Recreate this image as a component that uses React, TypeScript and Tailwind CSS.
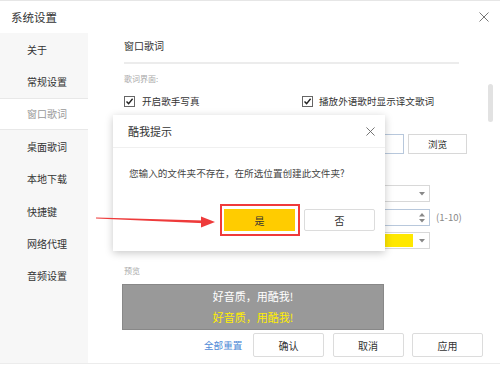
import React from 'react';

const font = "font-['Noto_Sans_CJK_SC','Microsoft_YaHei',sans-serif]";

const navItems = ['关于', '常规设置', '窗口歌词', '桌面歌词', '本地下载', '快捷键', '网络代理', '音频设置'];

const CloseIcon: React.FC<{ size: number; color?: string }> = ({ size, color = '#777' }) => (
    <svg width={size} height={size} viewBox="0 0 10 10" fill="none">
        <path d="M0.5 0.5 L9.5 9.5 M9.5 0.5 L0.5 9.5" stroke={color} strokeWidth="1" />
    </svg>
);

const Checkbox: React.FC = () => (
    <div className="w-[11px] h-[11px] border border-[#666] bg-white flex items-center justify-center">
        <svg width="9" height="9" viewBox="0 0 9 9" fill="none">
            <path d="M1.5 4.5 L3.6 6.6 L7.6 1.8" stroke="#222" strokeWidth="1.4" />
        </svg>
    </div>
);

const Caret: React.FC = () => (
    <svg width="6" height="4" viewBox="0 0 6 4">
        <path d="M0 0 L6 0 L3 3.5 Z" fill="#888" />
    </svg>
);

const App: React.FC = () => {
    return (
        <div className={`${font} relative w-[500px] h-[365px] overflow-hidden bg-white border-t border-[#e6e6e6] text-[#333]`}>
            {/* title bar */}
            <div className="h-[32px] flex items-center justify-between pl-[11px] pr-[11px]">
                <span className="text-[11.5px] leading-[14px]">系统设置</span>
                <CloseIcon size={10} />
            </div>

            <div className="flex h-[331px] border-b border-[#ececec]">
                {/* sidebar */}
                <div className="w-[88px] bg-[#f7f7f7] flex flex-col">
                    {navItems.map((item) => (
                        <div
                            key={item}
                            className={`h-[32.4px] flex items-center pl-[27px] text-[10px] ${
                                item === '窗口歌词' ? 'bg-white border-y border-[#e8e8e8] text-[#999]' : 'text-[#333]'
                            }`}
                        >
                            {item}
                        </div>
                    ))}
                </div>

                {/* content */}
                <div className="relative flex-1 pl-[36px] flex flex-col">
                    <div className="mt-[6px] h-[14px] leading-[14px] text-[10px]">窗口歌词</div>
                    <div className="mt-[9px] h-[2px] w-[335px] bg-[#ececec]" />
                    <div className="mt-[10px] h-[10px] leading-[10px] text-[8px] text-[#aaa]">歌词界面:</div>

                    <div className="mt-[11px] h-[12px] flex items-center text-[9.6px]">
                        <div className="w-[178px] flex items-center gap-[7px]">
                            <Checkbox />
                            <span>开启歌手写真</span>
                        </div>
                        <div className="flex items-center gap-[6px]">
                            <Checkbox />
                            <span>播放外语歌时显示译文歌词</span>
                        </div>
                    </div>

                    <div className="mt-[27px] h-[20px] flex items-center">
                        <div className="ml-[50px] w-[230px] h-[20px] border border-[#b8c8dc] bg-white" />
                        <div className="ml-[4px] w-[59px] h-[20px] border border-[#d8d8d8] flex items-center justify-center text-[9.6px]">
                            浏览
                        </div>
                    </div>

                    <div className="mt-[31px] ml-[176px] w-[130px] h-[17px] border border-[#d8d8d8] flex items-center justify-end pr-[4px]">
                        <Caret />
                    </div>

                    <div className="mt-[7px] flex items-center">
                        <div className="ml-[176px] w-[130px] h-[17px] border border-[#b8c8dc] flex items-center justify-end pr-[4px]">
                            <div className="flex flex-col gap-[2px]">
                                <svg width="6" height="4" viewBox="0 0 6 4">
                                    <path d="M0 3.5 L6 3.5 L3 0 Z" fill="#888" />
                                </svg>
                                <Caret />
                            </div>
                        </div>
                        <span className="ml-[6px] text-[9.6px] text-[#888]">(1-10)</span>
                    </div>

                    <div className="mt-[6px] ml-[176px] w-[130px] h-[17px] border border-[#d8d8d8] flex items-center pl-[3px] pr-[4px]">
                        <div className="flex-1 h-[13px] bg-[#ffe800]" />
                        <div className="ml-[6px]">
                            <Caret />
                        </div>
                    </div>

                    <div className="mt-[17px] h-[10px] leading-[10px] text-[8px] text-[#aaa]">预览</div>
                    <div className="mt-[8px] -ml-[2px] w-[262px] h-[46px] bg-[#999] border border-[#888] flex flex-col items-center justify-center gap-[8px] text-[11px] leading-[13px]">
                        <span className="text-white">好音质，用酷我!</span>
                        <span className="text-[#ffee00]">好音质，用酷我!</span>
                    </div>

                    <div className="mt-[3px] h-[24px] flex items-center text-[10px]">
                        <span className="ml-[80px] w-[38px] whitespace-nowrap text-[9.6px] text-[#4f8ad6]">全部重置</span>
                        <div className="ml-[11px] flex gap-[8.5px]">
                            {['确认', '取消', '应用'].map((b) => (
                                <div
                                    key={b}
                                    className="w-[71px] h-[24px] border border-[#dcdcdc] rounded-[2px] bg-white flex items-center justify-center"
                                >
                                    {b}
                                </div>
                            ))}
                        </div>
                    </div>

                    {/* scrollbar thumb */}
                    <div className="absolute right-[7px] top-[51px] w-[5px] h-[38px] rounded-full bg-[#e2e2e2]" />
                </div>
            </div>

            {/* dialog */}
            <div className="absolute left-[113px] top-[114px] w-[272px] h-[136px] bg-white shadow-[0_2px_8px_rgba(0,0,0,0.22)] flex flex-col">
                <div className="h-[33px] border-b border-[#f0f0f0] flex items-center justify-between pl-[15px] pr-[10px]">
                    <span className="text-[11px]">酷我提示</span>
                    <CloseIcon size={9} color="#666" />
                </div>
                <div className="mt-[19px] pl-[16px] text-[9.6px] leading-[12px] text-[#444]">
                    您输入的文件夹不存在，在所选位置创建此文件夹?
                </div>
                <div className="mt-[30px] ml-[111px] flex gap-[9px] text-[10px]">
                    <div className="w-[71px] h-[22px] bg-[#ffcc00] flex items-center justify-center">是</div>
                    <div className="w-[71px] h-[22px] border border-[#dcdcdc] rounded-[2px] flex items-center justify-center">否</div>
                </div>
            </div>

            {/* red annotation frame */}
            <div className="absolute left-[220px] top-[203px] w-[80px] h-[32px] border-2 border-[#f03a3a]" />

            {/* red arrow */}
            <svg className="absolute left-[94px] top-[210px]" width="124" height="20" viewBox="0 0 124 20">
                <polygon points="2,6.4 2,7.4 110,12.2 110,9.6" fill="#ee3b3b" />
                <polygon points="107,5.5 121,11 107,16.5" fill="#ee3b3b" />
            </svg>
        </div>
    );
};

export default App;
